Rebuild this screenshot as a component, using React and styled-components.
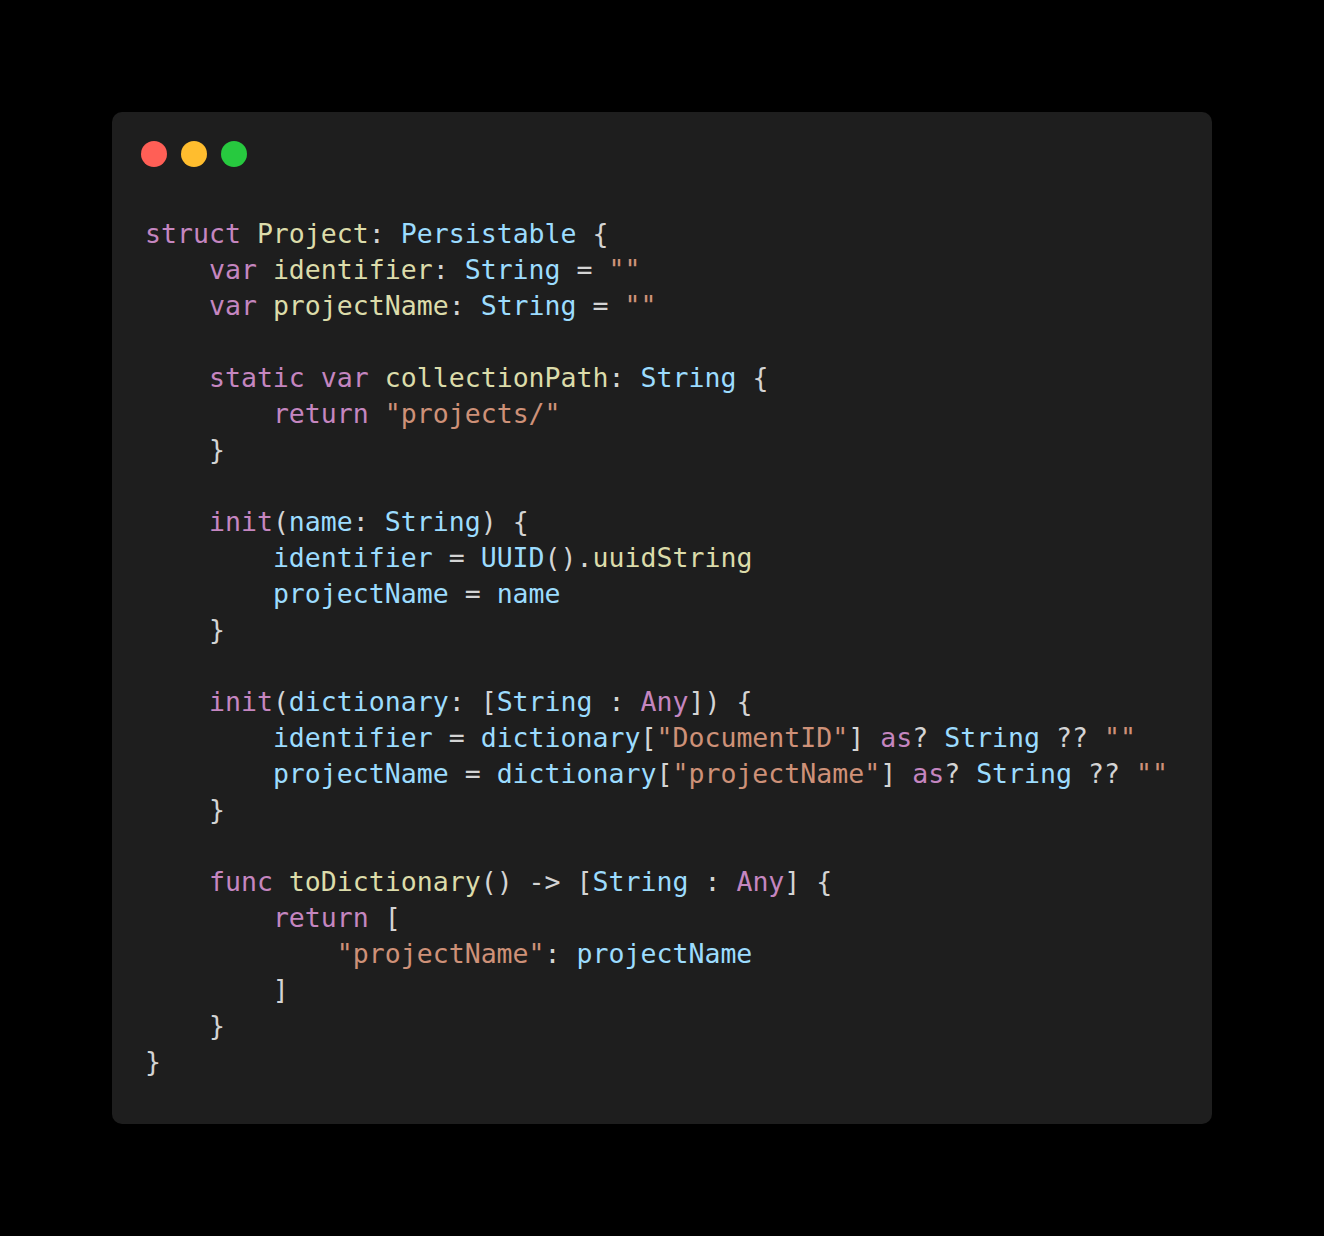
import React from "react";
import styled, { createGlobalStyle } from "styled-components";

const Global = createGlobalStyle`
  html, body { margin: 0; padding: 0; background: #000; }
  body { font-family: "DejaVu Sans Mono", monospace; }
`;

const Page = styled.div`
  padding: 112px;
  background: #000;
  min-height: 1236px;
  box-sizing: border-box;
`;

const Window = styled.div`
  background: #1e1e1e;
  border-radius: 10px;
  padding: 29px 30px 44px 29px;
  display: flex;
  flex-direction: column;
  gap: 49px;
`;

const Dots = styled.div`
  display: flex;
  gap: 14px;
`;

const Dot = styled.span`
  width: 26px;
  height: 26px;
  border-radius: 50%;
  background: ${(p) => p.$c};
`;

const Code = styled.pre`
  margin: 0 0 0 4px;
  font-family: "DejaVu Sans Mono", monospace;
  font-size: 26.55px;
  line-height: 36px;
  color: #d4d4d4;
  white-space: pre;
`;

const Line = styled.div`
  height: 36px;
`;

const colors = {
  k: "#c586c0",
  f: "#dcdcaa",
  v: "#9cdcfe",
  s: "#ce9178",
  p: "#d4d4d4",
};

const Tok = styled.span`
  color: ${(p) => colors[p.$t]};
`;

const lines = [
  [["k", "struct"], ["p", " "], ["f", "Project"], ["p", ": "], ["v", "Persistable"], ["p", " {"]],
  [["p", "    "], ["k", "var"], ["p", " "], ["f", "identifier"], ["p", ": "], ["v", "String"], ["p", " = "], ["s", '""']],
  [["p", "    "], ["k", "var"], ["p", " "], ["f", "projectName"], ["p", ": "], ["v", "String"], ["p", " = "], ["s", '""']],
  [],
  [["p", "    "], ["k", "static"], ["p", " "], ["k", "var"], ["p", " "], ["f", "collectionPath"], ["p", ": "], ["v", "String"], ["p", " {"]],
  [["p", "        "], ["k", "return"], ["p", " "], ["s", '"projects/"']],
  [["p", "    }"]],
  [],
  [["p", "    "], ["k", "init"], ["p", "("], ["v", "name"], ["p", ": "], ["v", "String"], ["p", ") {"]],
  [["p", "        "], ["v", "identifier"], ["p", " = "], ["v", "UUID"], ["p", "()."], ["f", "uuidString"]],
  [["p", "        "], ["v", "projectName"], ["p", " = "], ["v", "name"]],
  [["p", "    }"]],
  [],
  [["p", "    "], ["k", "init"], ["p", "("], ["v", "dictionary"], ["p", ": ["], ["v", "String"], ["p", " : "], ["k", "Any"], ["p", "]) {"]],
  [["p", "        "], ["v", "identifier"], ["p", " = "], ["v", "dictionary"], ["p", "["], ["s", '"DocumentID"'], ["p", "] "], ["k", "as"], ["p", "? "], ["v", "String"], ["p", " ?? "], ["s", '""']],
  [["p", "        "], ["v", "projectName"], ["p", " = "], ["v", "dictionary"], ["p", "["], ["s", '"projectName"'], ["p", "] "], ["k", "as"], ["p", "? "], ["v", "String"], ["p", " ?? "], ["s", '""']],
  [["p", "    }"]],
  [],
  [["p", "    "], ["k", "func"], ["p", " "], ["f", "toDictionary"], ["p", "() -> ["], ["v", "String"], ["p", " : "], ["k", "Any"], ["p", "] {"]],
  [["p", "        "], ["k", "return"], ["p", " ["]],
  [["p", "            "], ["s", '"projectName"'], ["p", ": "], ["v", "projectName"]],
  [["p", "        ]"]],
  [["p", "    }"]],
  [["p", "}"]],
];

export default function App() {
  return (
    <Page>
      <Global />
      <Window>
        <Dots>
          <Dot $c="#ff5f56" />
          <Dot $c="#ffbd2e" />
          <Dot $c="#27c93f" />
        </Dots>
        <Code>
          {lines.map((toks, i) => (
            <Line key={i}>
              {toks.map(([t, s], j) => (
                <Tok key={j} $t={t}>
                  {s}
                </Tok>
              ))}
            </Line>
          ))}
        </Code>
      </Window>
    </Page>
  );
}
